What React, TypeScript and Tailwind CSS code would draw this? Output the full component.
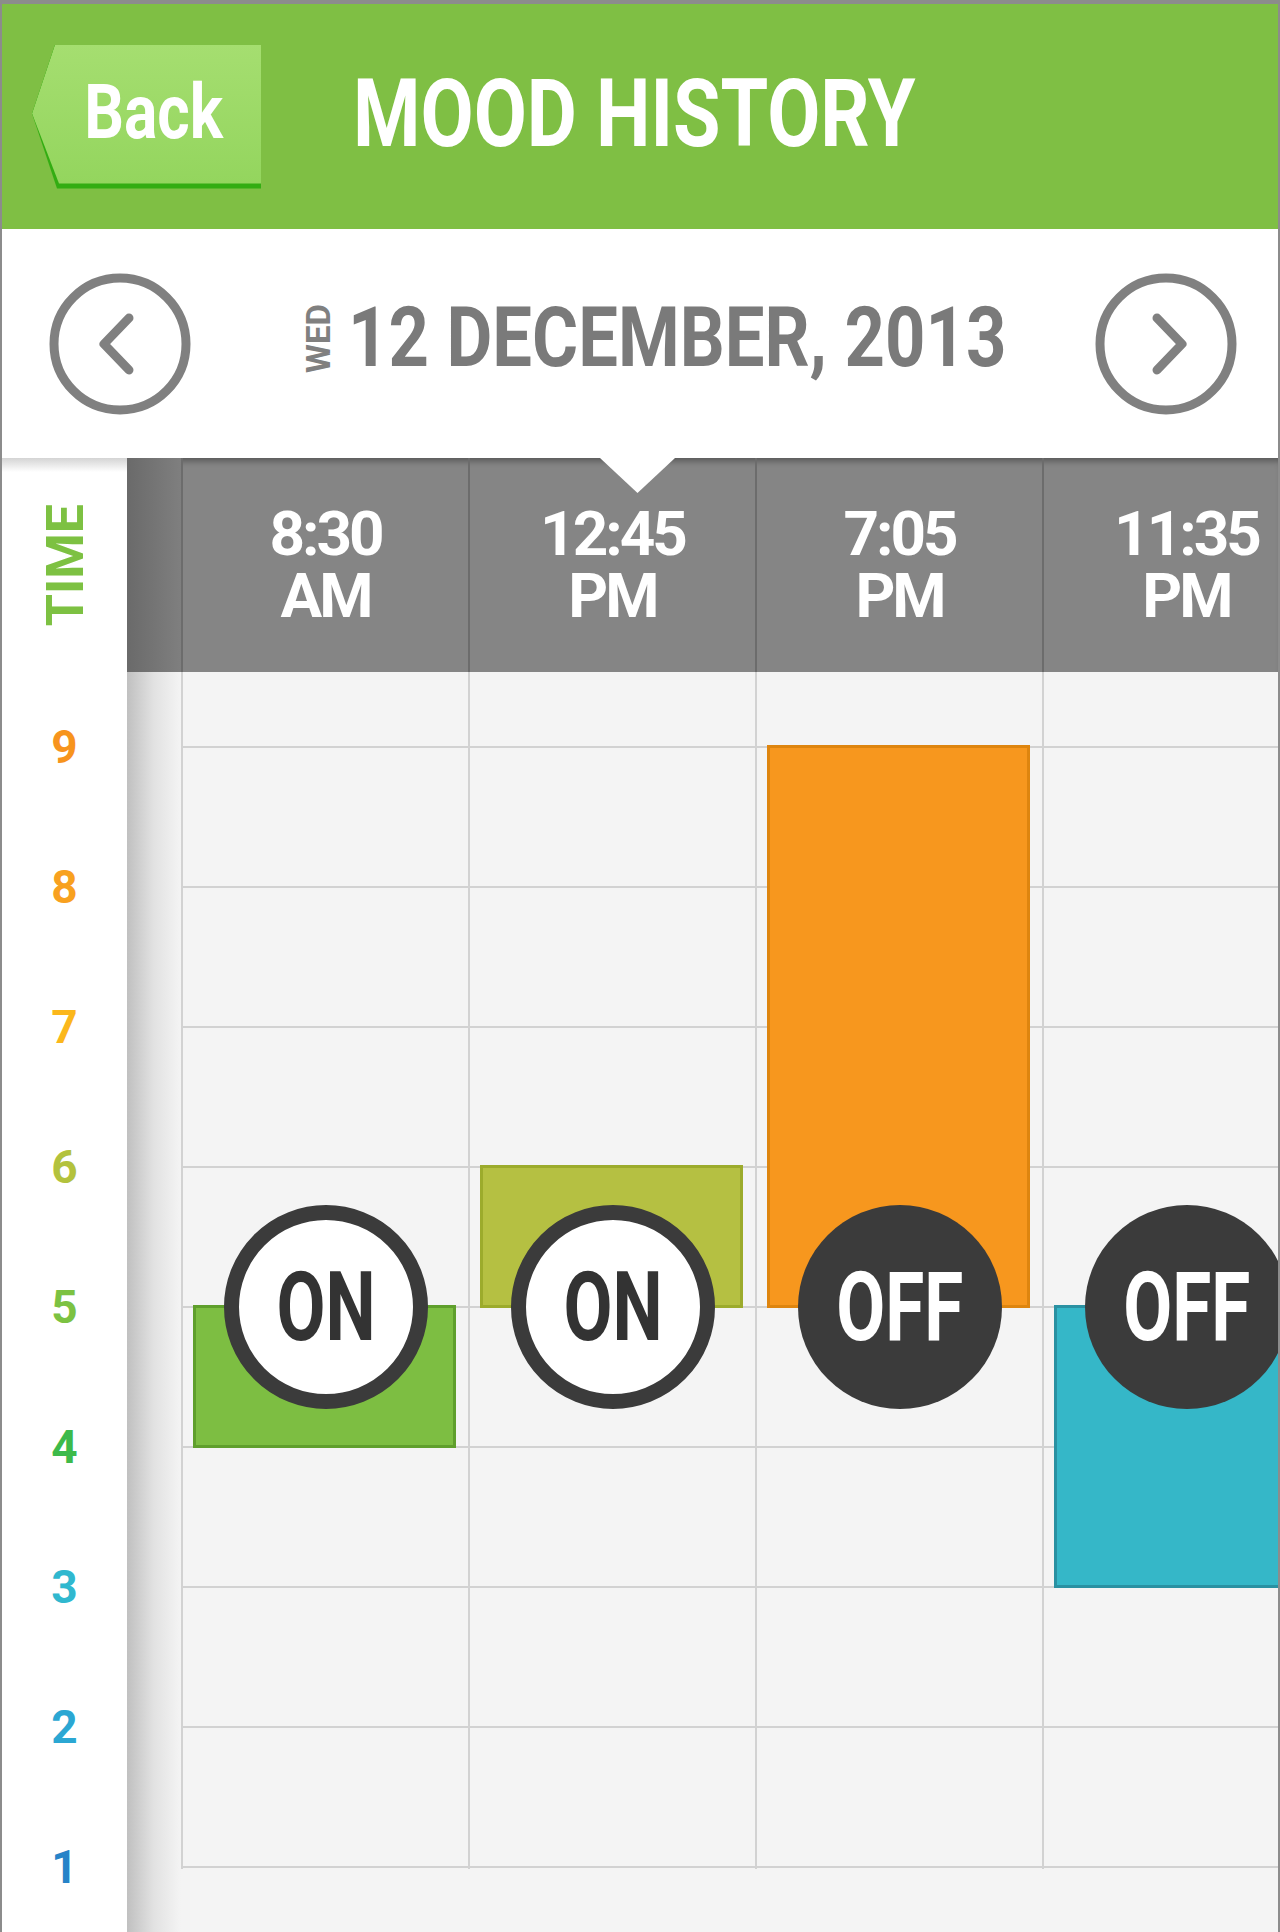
import React from 'react';

interface Entry {
  time: string;
  period: string;
  low: number;
  high: number;
  barClass: string;
  on: boolean;
}

const entries: Entry[] = [
  { time: '8:30', period: 'AM', low: 4, high: 5, barClass: 'bg-[#7dbe42] border-[#5f9f2c]', on: true },
  { time: '12:45', period: 'PM', low: 5, high: 6, barClass: 'bg-[#b5c042] border-[#9cab2c]', on: true },
  { time: '7:05', period: 'PM', low: 5, high: 9, barClass: 'bg-[#f7971e] border-[#de850f]', on: false },
  { time: '11:35', period: 'PM', low: 3, high: 5, barClass: 'bg-[#35b7c8] border-[#2a91a2]', on: false },
];

const levels = [
  { n: 9, color: 'text-[#f7941d]' },
  { n: 8, color: 'text-[#f8a11f]' },
  { n: 7, color: 'text-[#fbb71b]' },
  { n: 6, color: 'text-[#b3c23d]' },
  { n: 5, color: 'text-[#7cc242]' },
  { n: 4, color: 'text-[#3dba4a]' },
  { n: 3, color: 'text-[#30b8cf]' },
  { n: 2, color: 'text-[#2ba7d3]' },
  { n: 1, color: 'text-[#2783c8]' },
];

// grid geometry (px, relative to the chart body)
const TOP = 75;
const STEP = 140;
const levelY = (lvl: number) => TOP + (9 - lvl) * STEP;

const ArrowCircle: React.FC<{ dir: 'left' | 'right'; className?: string }> = ({ dir, className }) => (
  <button className={`h-[142px] w-[142px] shrink-0 ${className ?? ''}`} aria-label={dir === 'left' ? 'Previous day' : 'Next day'}>
    <svg width="142" height="142" viewBox="0 0 142 142" fill="none" stroke="#808080" strokeLinecap="round" strokeLinejoin="round">
      <circle cx="71" cy="71" r="66" strokeWidth="9" />
      {dir === 'left' ? (
        <polyline points="80,45 55,71 80,97" strokeWidth="9" />
      ) : (
        <polyline points="62,45 87,71 62,97" strokeWidth="9" />
      )}
    </svg>
  </button>
);

export default function App() {
  return (
    <div className="flex h-[1932px] w-[1280px] flex-col overflow-hidden border-x-2 border-t-4 border-[#8c8c8c] bg-white font-['Roboto','Liberation_Sans',sans-serif]">
      {/* Title bar */}
      <header className="flex h-[225px] shrink-0 items-center bg-[#7fbf44]">
        <button className="relative ml-[30px] flex h-[144px] w-[229px] shrink-0 items-center justify-center bg-[#33ad12] pb-[10px] pl-[15px] [clip-path:polygon(23px_0,100%_0,100%_100%,25px_100%,0_69px)]">
          <span className="absolute inset-0 bg-linear-to-b from-[#a5de70] to-[#93d55d] [clip-path:polygon(23px_0,100%_0,100%_139px,27px_139px,0_69px)]" />
          <span className="relative scale-x-[0.82] text-[76px] font-bold leading-none text-white">Back</span>
        </button>
        <div className="ml-[92px] w-[563px] pb-[6px]">
          <h1 className="origin-left scale-x-[0.82] whitespace-nowrap text-[94px] font-bold leading-none text-white">MOOD HISTORY</h1>
        </div>
      </header>

      {/* Date selector */}
      <div className="relative z-10 flex h-[229px] shrink-0 items-center">
        <ArrowCircle dir="left" className="ml-[47px]" />
        <div className="mb-[11px] ml-[111px] flex items-center">
          <span className="rotate-180 text-[33px] font-bold leading-none text-[#808080] [writing-mode:vertical-rl]">WED</span>
          <div className="ml-[13px] w-[653px]">
            <span className="block origin-left scale-x-[0.84] whitespace-nowrap text-[84px] font-bold leading-none text-[#7a7a7a]">
              12 DECEMBER, 2013
            </span>
          </div>
        </div>
        <ArrowCircle dir="right" className="ml-auto mr-[41px]" />
      </div>

      {/* Chart */}
      <div className="flex min-h-0 flex-1">
        {/* Level labels */}
        <div className="flex w-[125px] shrink-0 flex-col bg-white">
          <div className="relative flex h-[214px] shrink-0 items-center justify-center">
            <div className="absolute inset-x-0 top-0 h-[14px] bg-linear-to-b from-[#d4d4d4] to-white" />
            <span className="relative ml-[2px] rotate-180 text-[52px] font-bold leading-none text-[#7dc142] [writing-mode:vertical-rl]">TIME</span>
          </div>
          <div className="flex flex-col pt-[5px]">
            {levels.map((l) => (
              <div key={l.n} className={`flex h-[140px] items-center justify-center text-[46px] font-bold leading-none ${l.color}`}>
                {l.n}
              </div>
            ))}
          </div>
        </div>

        <div className="flex min-w-0 flex-1 flex-col overflow-hidden">
          {/* Time header */}
          <div className="relative flex h-[214px] shrink-0 bg-[#858585] shadow-[inset_0_7px_6px_-4px_rgba(0,0,0,0.35)]">
            <div className="w-[54px] shrink-0 bg-linear-to-r from-[#6a6a6a] to-[#7f7f7f]" />
            {entries.map((e) => (
              <div key={e.time} className="flex w-[287px] shrink-0 items-center justify-center border-l-2 border-[#6c6c6c]">
                <p className="text-center text-[62px] font-bold leading-[62px] tracking-[-3px] text-white">
                  {e.time}
                  <br />
                  {e.period}
                </p>
              </div>
            ))}
            <svg className="absolute left-[473px] top-0" width="75" height="35" viewBox="0 0 75 35">
              <polygon points="0,0 75,0 37.5,35" fill="#ffffff" />
            </svg>
          </div>

          {/* Grid body */}
          <div className="flex min-h-0 flex-1 bg-[#f4f4f4]">
            <div className="w-[54px] shrink-0 bg-linear-to-r from-[#c0c0c0] via-[#e2e2e2] to-[#f4f4f4]" />
            <div className="relative min-w-0 flex-1">
              {levels.map((l) => (
                <div key={l.n} className="absolute left-0 right-0 h-[2px] bg-[#d2d2d2]" style={{ top: levelY(l.n) - 1 }} />
              ))}
              <div className="flex h-[1197px]">
                {entries.map((e) => (
                  <div key={e.time} className="relative w-[287px] shrink-0 border-l-2 border-[#d2d2d2]">
                    <div
                      className={`absolute left-[10px] right-[12px] border-[3px] ${e.barClass}`}
                      style={{ top: levelY(e.high) - 2, height: (e.high - e.low) * STEP + 3 }}
                    />
                    <div
                      className={`absolute left-1/2 flex h-[204px] w-[204px] -translate-x-1/2 items-center justify-center rounded-full ${
                        e.on ? 'border-[15px] border-[#3b3b3b] bg-white text-[#333333]' : 'bg-[#3b3b3b] text-white'
                      }`}
                      style={{ top: levelY(5) - 102 }}
                    >
                      <span className="scale-x-[0.74] text-[96px] font-bold leading-none">{e.on ? 'ON' : 'OFF'}</span>
                    </div>
                  </div>
                ))}
              </div>
            </div>
          </div>
        </div>
      </div>
    </div>
  );
}
